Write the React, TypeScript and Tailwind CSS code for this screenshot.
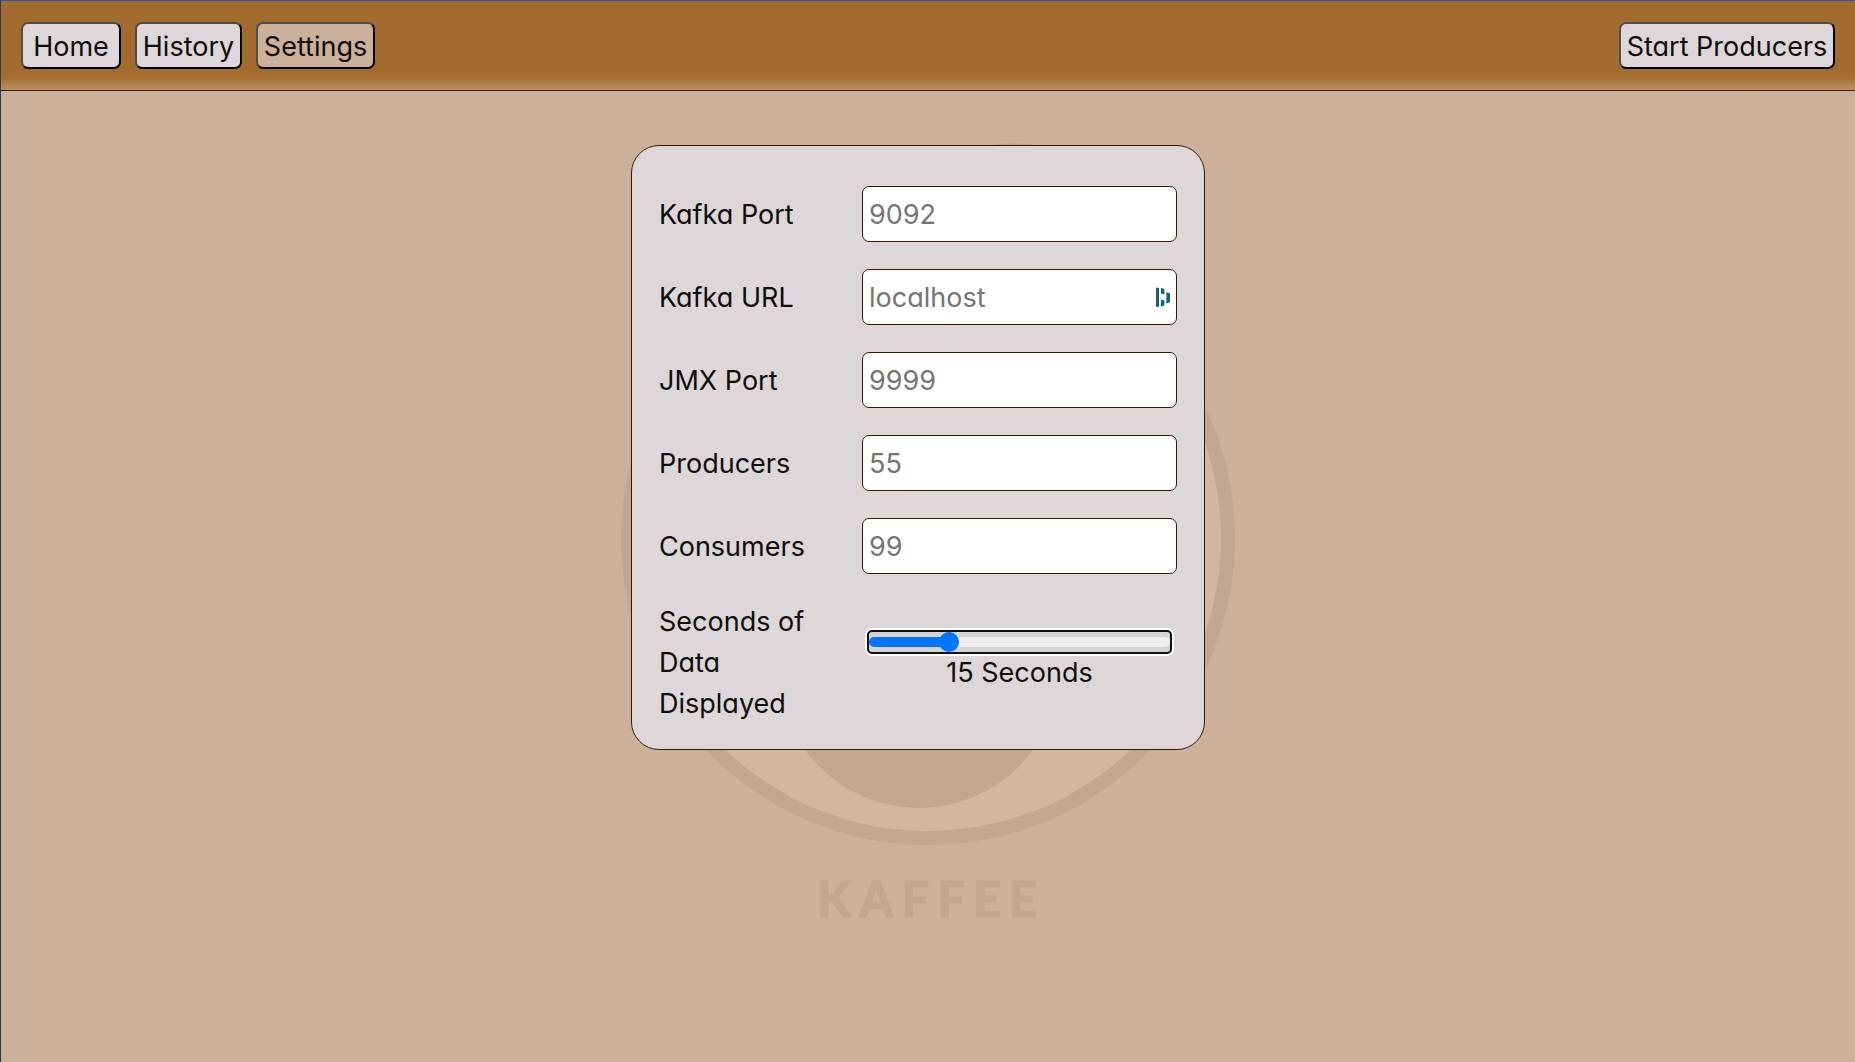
import { useState, type CSSProperties } from "react";

const fields = [
  { id: "kafka-port", label: "Kafka Port", placeholder: "9092" },
  { id: "kafka-url", label: "Kafka URL", placeholder: "localhost", manager: true },
  { id: "jmx-port", label: "JMX Port", placeholder: "9999" },
  { id: "producers", label: "Producers", placeholder: "55" },
  { id: "consumers", label: "Consumers", placeholder: "99" },
];

function NavButton({ children, size, active = false }: { children: string; size: string; active?: boolean }) {
  return (
    <button
      type="button"
      className={`h-[47px] rounded-[7px] border-2 border-t-[#4d4d4d] border-l-[#4d4d4d] border-r-black border-b-black pt-px whitespace-nowrap ${size} ${
        active ? "bg-[#ccb19a]" : "bg-[#ddd7d9]"
      }`}
    >
      {children}
    </button>
  );
}

function Watermark() {
  return (
    <svg
      viewBox="0 0 620 800"
      className="pointer-events-none absolute top-[52px] left-1/2 w-[620px] -translate-x-1/2"
      aria-hidden="true"
    >
      <ellipse cx="395" cy="30" rx="60" ry="30" fill="#c1a78f" />
      <circle cx="310" cy="395" r="300" fill="#d0b79e" stroke="#c1a78f" strokeWidth="14" />
      <circle cx="301" cy="524" r="141" fill="#c1a78f" />
      <text
        x="199"
        y="774"
        fontFamily="Lato, sans-serif"
        fontWeight="900"
        fontSize="49"
        letterSpacing="8"
        fill="#c1a78f"
        stroke="#c1a78f"
        strokeWidth="1"
      >
        KAFFEE
      </text>
    </svg>
  );
}

function ManagerIcon() {
  return (
    <svg viewBox="0 0 14 20" className="absolute top-1/2 right-[7px] h-5 w-[14px] -translate-y-1/2" aria-hidden="true">
      <g fill="#0e6475">
        <path d="M0 0.4 3 1V19.4L0 20Z" />
        <path d="M5 1 7.6 1.8 8.4 2.8V7.4L5 6.4Z" />
        <path d="M5 12.4 8.4 13.4V17.8L7.6 18.8 5 19.6Z" />
        <path d="M10.4 5.2 13.2 6 14 6.8V14.8L13.2 15.6 10.4 16.4Z" />
      </g>
    </svg>
  );
}

export default function App() {
  const [seconds, setSeconds] = useState(15);
  const share = seconds / 60;
  const sliderStyle = { "--fill": `calc(${share * 100}% + ${10 - share * 20}px)` } as CSSProperties;

  return (
    <div className="flex min-h-screen flex-col border-t border-l border-t-[#2158a5] border-l-[#2d3a5c] bg-[#ccb19a] font-['Inter',sans-serif] text-[27px] leading-[41px] text-[#0f0c0a] [font-feature-settings:'cv11']">
      <header className="flex items-center justify-between border-b border-[#3b1700] bg-[linear-gradient(to_bottom,#a36b2d_85%,#bd9162)] px-5 py-[21px]">
        <nav className="flex gap-[14px]">
          <NavButton size="w-[100px]">Home</NavButton>
          <NavButton size="w-[107px]">History</NavButton>
          <NavButton size="w-[119px]" active>
            Settings
          </NavButton>
        </nav>
        <NavButton size="w-[216px]">Start Producers</NavButton>
      </header>

      <main className="relative flex-1 overflow-hidden pt-[54px] pr-5">
        <Watermark />
        <form className="relative mx-auto flex w-full max-w-[574px] flex-col gap-[27px] rounded-[28px] border border-[#3b1700] bg-[#ddd7d9] px-[27px] pt-10 pb-[25px]">
          {fields.map((f) => (
            <div key={f.id} className="flex items-center justify-between">
              <label htmlFor={f.id} className="w-40">
                {f.label}
              </label>
              <div className="relative w-[315px]">
                <input
                  id={f.id}
                  type="text"
                  placeholder={f.placeholder}
                  className="block h-14 w-full rounded-[7px] border border-[#3b1700] bg-white px-[6px] placeholder:text-[#757575]"
                />
                {f.manager && <ManagerIcon />}
              </div>
            </div>
          ))}
          <div className="flex items-center justify-between">
            <label htmlFor="seconds" className="w-40">
              Seconds of Data Displayed
            </label>
            <div className="flex w-[315px] flex-col items-center">
              <input
                id="seconds"
                type="range"
                min={0}
                max={60}
                value={seconds}
                onChange={(e) => setSeconds(Number(e.target.value))}
                style={sliderStyle}
                className="h-5 w-[301px] appearance-none rounded-[3px] bg-[#d8d3d3] shadow-[0_0_0_4px_white] outline-2 outline-[#101010] [&::-webkit-slider-runnable-track]:h-[10px] [&::-webkit-slider-runnable-track]:rounded-full [&::-webkit-slider-runnable-track]:bg-[linear-gradient(to_right,#0075ff_var(--fill),#efefef_var(--fill))] [&::-webkit-slider-thumb]:-mt-[5px] [&::-webkit-slider-thumb]:size-5 [&::-webkit-slider-thumb]:appearance-none [&::-webkit-slider-thumb]:rounded-full [&::-webkit-slider-thumb]:bg-[#0075ff]"
              />
              <output htmlFor="seconds">{seconds} Seconds</output>
            </div>
          </div>
        </form>
      </main>
    </div>
  );
}
